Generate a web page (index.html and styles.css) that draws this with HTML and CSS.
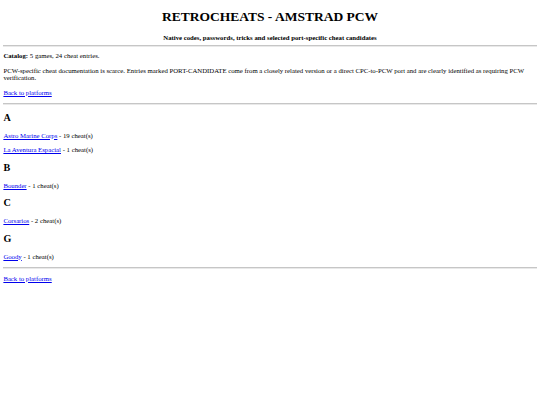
FILE: index.html
```html
<!DOCTYPE html>
<html lang="en">
<head>
<meta charset="utf-8">
<title>RetroCheats - Amstrad PCW</title>
<link rel="stylesheet" href="styles.css">
</head>
<body>
<header class="site-header">
  <h1 class="title">RETROCHEATS - AMSTRAD PCW</h1>
  <p class="subtitle">Native codes, passwords, tricks and selected port-specific cheat candidates</p>
</header>
<hr class="rule">
<main class="content">
  <p class="text"><strong>Catalog:</strong> 5 games, 24 cheat entries.</p>
  <p class="text">PCW-specific cheat documentation is scarce. Entries marked PORT-CANDIDATE come from a closely related version or a direct CPC-to-PCW port and are clearly identified as requiring PCW verification.</p>
  <p class="text"><a class="link" href="#">Back to platforms</a></p>
  <hr class="rule">
  <section class="group">
    <h2 class="letter">A</h2>
    <p class="text"><a class="link" href="#">Astro Marine Corps</a> - 19 cheat(s)</p>
    <p class="text"><a class="link" href="#">La Aventura Espacial</a> - 1 cheat(s)</p>
  </section>
  <section class="group">
    <h2 class="letter">B</h2>
    <p class="text"><a class="link" href="#">Bounder</a> - 1 cheat(s)</p>
  </section>
  <section class="group">
    <h2 class="letter">C</h2>
    <p class="text"><a class="link" href="#">Corsarios</a> - 2 cheat(s)</p>
  </section>
  <section class="group">
    <h2 class="letter">G</h2>
    <p class="text"><a class="link" href="#">Goody</a> - 1 cheat(s)</p>
  </section>
  <hr class="rule">
  <p class="text"><a class="link" href="#">Back to platforms</a></p>
</main>
</body>
</html>
```
FILE: styles.css
```css
html {
  background: #ffffff;
}
body {
  margin: 0 3.375px 3.375px;
  font-family: "Liberation Serif", "Times New Roman", serif;
  font-size: 6.75px;
  line-height: 7.55px;
  color: #000000;
}
.site-header {
  text-align: center;
}
.title {
  font-size: 13.5px;
  line-height: 15.6px;
  font-weight: bold;
  margin: 9.05px 0;
}
.subtitle {
  font-weight: bold;
  margin: 0;
}
.rule {
  height: 0;
  border: 0;
  border-top: 1px solid #c6c6c6;
  box-shadow: 0 1px 0 #e9e9e9;
  margin: 3.375px 0;
}
.text {
  margin: 6.75px 0;
}
.letter {
  font-size: 10.125px;
  line-height: 11.5px;
  font-weight: bold;
  margin: 8.25px 0;
}
.link {
  color: #0000ee;
  text-decoration: underline;
}
```
